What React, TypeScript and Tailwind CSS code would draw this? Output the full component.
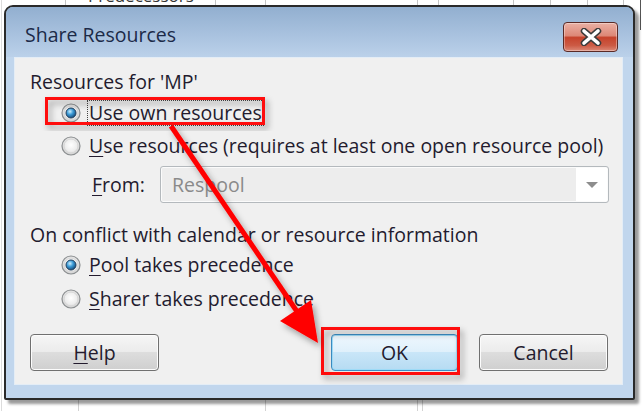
import React from "react";

const TXT = "text-[#231b2e]";

function Radio({ checked }: { checked: boolean }) {
  return (
    <svg width="20" height="20" viewBox="0 0 20 20" className="shrink-0">
      <defs>
        <radialGradient id="rbg" cx="50%" cy="45%" r="55%">
          <stop offset="0" stopColor="#ffffff" />
          <stop offset="0.6" stopColor="#ededed" />
          <stop offset="1" stopColor="#cfcfcf" />
        </radialGradient>
        <radialGradient id="rdot" cx="40%" cy="35%" r="70%">
          <stop offset="0" stopColor="#cdeefd" />
          <stop offset="0.45" stopColor="#3a9ad6" />
          <stop offset="1" stopColor="#123f6b" />
        </radialGradient>
      </defs>
      <circle cx="10" cy="10" r="9" fill="url(#rbg)" stroke="#8c8f91" strokeWidth="1.2" />
      <circle cx="10" cy="10" r="7" fill="none" stroke="#d6d6d6" strokeWidth="1" />
      {checked && <circle cx="10" cy="10" r="5" fill="url(#rdot)" stroke="#24415f" strokeWidth="1" />}
    </svg>
  );
}

function CloseButton() {
  return (
    <div className="mt-[15px] mr-[15px] w-[55px] h-[30px] rounded-[4px] border border-[#5a2a26] bg-[linear-gradient(to_bottom,#eab0a4_0%,#dd8877_45%,#c6432c_52%,#cc5a44_80%,#dc8a78_100%)] shadow-[inset_0_0_0_1px_rgba(255,255,255,0.35)] flex items-center justify-center">
      <svg width="24" height="18" viewBox="0 0 24 18">
        <path d="M5 3 L19 15 M19 3 L5 15" stroke="#3b3b3b" strokeWidth="6.5" strokeLinecap="round" />
        <path d="M5 3 L19 15 M19 3 L5 15" stroke="#ffffff" strokeWidth="3.6" strokeLinecap="round" />
      </svg>
    </div>
  );
}

function Background() {
  const top = [65, 215, 265, 417, 438, 513, 550, 587, 623];
  const bottom = [78, 265, 417, 422];
  return (
    <div className="absolute inset-0">
      {top.map((x) => (
        <div key={"t" + x} className="absolute top-0 h-[6px] w-px bg-[#c4c4c4]" style={{ left: x }} />
      ))}
      {bottom.map((x) => (
        <div key={"b" + x} className="absolute bottom-0 h-[12px] w-px bg-[#d2d2d2]" style={{ left: x }} />
      ))}
      <div className="absolute left-[1px] top-0 h-full w-px bg-[#dcdcdc]" />
      <div className="absolute left-[640px] top-0 h-[30px] w-px bg-[#555]" />
      <div className="absolute left-[88px] top-[-14px] text-[17px] leading-[20px] text-[#333]">Predecessors</div>
    </div>
  );
}

export default function App() {
  return (
    <div className={`relative w-[644px] h-[411px] overflow-hidden bg-white font-['Open_Sans',sans-serif] ${TXT}`}>
      <Background />
      <div className="relative pt-[5px] pl-[4px]">
        <div className="w-[631px] h-[395px] flex flex-col overflow-hidden rounded-t-[9px] rounded-b-[2px] border-2 border-[#2a2a2a] bg-[#c1d6ed] shadow-[4px_4px_3px_rgba(0,0,0,0.4)]">
          <div className="h-[50px] shrink-0 flex items-start justify-between bg-gradient-to-b from-[#92afd0] to-[#bbd1ea]">
            <div className="mt-[15px] ml-[19px] text-[19.5px] leading-[26px] text-[#1c2a48]">Share Resources</div>
            <CloseButton />
          </div>
          <div className="flex-1 ml-[8px] mr-[10px] mb-[13px] bg-[#f0f0f0] border border-[#e4edf6] flex flex-col text-[19.5px] leading-[26px]">
            <div className="mt-[11px] ml-[15px] h-[26px]">Resources for 'MP'</div>

            <div className="mt-[5px] ml-[46px] h-[26px] flex items-center">
              <Radio checked />
              <span className="ml-[8px] inline-block h-[22px] leading-[22px] outline-1 outline-dotted outline-[#444] outline-offset-[1px]">
                Use <span className="underline underline-offset-[3px]">o</span>wn resources
              </span>
            </div>

            <div className="mt-[7px] ml-[46px] h-[26px] flex items-center">
              <Radio checked={false} />
              <span className="ml-[8px]">
                <span className="underline underline-offset-[3px]">U</span>se resources (requires at least one open resource pool)
              </span>
            </div>

            <div className="mt-[7px] ml-[77px] h-[37px] flex items-center">
              <div className="w-[68px]">
                <span className="underline underline-offset-[3px]">F</span>rom:
              </div>
              <div className="w-[449px] h-[37px] rounded-[3px] border border-[#b4b9bd] bg-[#ededed] shadow-[inset_0_0_0_1px_#fbfbfb] flex items-stretch">
                <div className="flex-1 flex items-center pl-[11px] text-[#8a8a8a]">Respool</div>
                <div className="w-[31px] my-[1px] mr-[1px] bg-white flex items-center justify-center">
                  <svg width="14" height="8" viewBox="0 0 14 8">
                    <path d="M1 1 L13 1 L7 7 Z" fill="#8d8d8d" />
                  </svg>
                </div>
              </div>
            </div>

            <div className="mt-[19px] ml-[15px] h-[26px]">On conflict with calendar or resource information</div>

            <div className="mt-[4px] ml-[46px] h-[26px] flex items-center">
              <Radio checked />
              <span className="ml-[8px]">
                <span className="underline underline-offset-[3px]">P</span>ool takes precedence
              </span>
            </div>

            <div className="mt-[8px] ml-[46px] h-[26px] flex items-center">
              <Radio checked={false} />
              <span className="ml-[8px]">
                <span className="underline underline-offset-[3px]">S</span>harer takes precedence
              </span>
            </div>

            <div className="mt-[22px] pl-[15px] pr-[14px] flex items-center">
              <button className="w-[129px] h-[37px] rounded-[4px] border border-[#707070] bg-[linear-gradient(to_bottom,#f6f6f6_0%,#ebebeb_49%,#dddddd_50%,#cfcfcf_100%)] shadow-[inset_0_0_0_1px_#fcfcfc] text-[19.5px] leading-[26px] text-[#231b2e]">
                <span className="underline underline-offset-[3px]">H</span>elp
              </button>
              <div className="flex-1" />
              <button className="w-[127px] h-[37px] rounded-[4px] border border-[#3c8fc6] bg-[linear-gradient(to_bottom,#eef7fd_0%,#dff0fb_49%,#c9e6f8_50%,#b6dbf2_100%)] shadow-[inset_0_0_0_1px_#9fdcf8] text-[19.5px] leading-[26px] text-[#231b2e]">
                OK
              </button>
              <button className="ml-[21px] w-[129px] h-[37px] rounded-[4px] border border-[#707070] bg-[linear-gradient(to_bottom,#f6f6f6_0%,#ebebeb_49%,#dddddd_50%,#cfcfcf_100%)] shadow-[inset_0_0_0_1px_#fcfcfc] text-[19.5px] leading-[26px] text-[#231b2e]">
                Cancel
              </button>
            </div>
          </div>
        </div>
      </div>

      <svg className="absolute inset-0 pointer-events-none" width="644" height="411" viewBox="0 0 644 411">
        <defs>
          <filter id="sh" x="-30%" y="-30%" width="160%" height="160%">
            <feDropShadow dx="3" dy="4" stdDeviation="3" floodColor="#000" floodOpacity="0.35" />
          </filter>
        </defs>
        <rect x="46.5" y="98.5" width="217" height="25" fill="none" stroke="#ff1010" strokeWidth="3" filter="url(#sh)" />
        <rect x="322.5" y="328.5" width="136" height="45" fill="none" stroke="#ff1010" strokeWidth="3" filter="url(#sh)" />
        <g filter="url(#sh)">
          <line x1="171" y1="126" x2="298" y2="313" stroke="#ff0000" strokeWidth="5" />
          <polygon points="318,343 280,321 311,300" fill="#ff0000" />
        </g>
      </svg>
    </div>
  );
}
